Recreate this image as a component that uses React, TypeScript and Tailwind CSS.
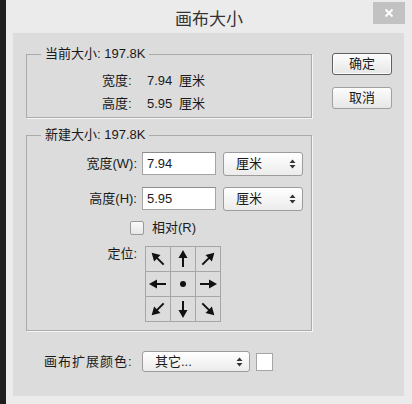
import React from "react";

const FONT = { fontFamily: '"Liberation Sans", "Noto Sans CJK SC", sans-serif' };

function Arrow({ angle }: { angle: number }) {
  return (
    <svg width="24" height="24" viewBox="0 0 24 24">
      <g transform={`rotate(${angle} 12 12)`}>
        <line x1="12" y1="20" x2="12" y2="9" stroke="#111" strokeWidth="2" />
        <polygon points="12,3 7.5,11 16.5,11" fill="#111" />
      </g>
    </svg>
  );
}

function SelectArrows() {
  return (
    <svg width="7" height="10" viewBox="0 0 7 10">
      <polygon points="3.5,0.5 6.5,4 0.5,4" fill="#333" />
      <polygon points="0.5,6 6.5,6 3.5,9.5" fill="#333" />
    </svg>
  );
}

function UnitSelect({ label, w }: { label: string; w: string }) {
  return (
    <div
      className={`${w} h-full flex items-center justify-between pl-[12px] pr-[6px] rounded-[3px] border border-[#9c9c9c] bg-gradient-to-b from-[#ffffff] to-[#ececec] text-[13px] text-[#1a1a1a]`}
    >
      <span>{label}</span>
      <SelectArrows />
    </div>
  );
}

export default function App() {
  const cells: (number | null)[] = [-45, 0, 45, -90, null, 90, -135, 180, 135];
  return (
    <div className="w-[412px] h-[404px] flex bg-[#1e1e1e] overflow-hidden" style={FONT}>
      <div className="ml-[6px] flex-1 flex flex-col bg-[#ebebeb]">
        {/* title bar */}
        <div className="h-[33px] relative flex items-center justify-center pt-[6px]">
          <span className="text-[17px] text-[#333]">画布大小</span>
          <div className="absolute top-[2px] right-[7px] w-[32px] h-[22px] bg-[#c2c2c2] flex items-center justify-center">
            <svg width="10" height="10" viewBox="0 0 10 10">
              <path d="M1.5 1.5 L8.5 8.5 M8.5 1.5 L1.5 8.5" stroke="#fff" strokeWidth="1.8" />
            </svg>
          </div>
        </div>

        {/* panel */}
        <div className="ml-[7px] mr-[8px] h-[363px] bg-[#dcdcdc] flex flex-col text-[#1a1a1a]">
          <div className="flex">
            <div className="ml-[13px] w-[286px] pt-[13px] flex flex-col">
              {/* box 1 */}
              <fieldset className="border border-[#ababab] shadow-[1px_1px_0_#f6f6f6] pb-[2px]">
                <legend className="ml-[14px] px-[4px] text-[13px] leading-[16px]">当前大小: 197.8K</legend>
                <div className="mt-[7px] flex flex-col text-[13px]">
                  <div className="h-[23px] flex items-center pl-[75px]">
                    <span className="w-[45px]">宽度:</span>
                    <span className="w-[32px]">7.94</span>
                    <span>厘米</span>
                  </div>
                  <div className="h-[23px] flex items-center pl-[75px]">
                    <span className="w-[45px]">高度:</span>
                    <span className="w-[32px]">5.95</span>
                    <span>厘米</span>
                  </div>
                </div>
              </fieldset>

              {/* box 2 */}
              <fieldset className="mt-[9px] border border-[#ababab] shadow-[1px_1px_0_#f6f6f6] pb-[8px]">
                <legend className="ml-[14px] px-[4px] text-[13px] leading-[16px]">新建大小: 197.8K</legend>
                <div className="mt-[9px] flex flex-col text-[13px]">
                  <div className="h-[23px] flex items-center">
                    <span className="w-[110px] text-right">宽度(W):</span>
                    <div className="ml-[5px] w-[74px] h-full border border-[#a4a4a4] border-t-[#8c8c8c] bg-white flex items-center pl-[4px]">
                      7.94
                    </div>
                    <div className="ml-[7px] h-[24px]">
                      <UnitSelect label="厘米" w="w-[80px]" />
                    </div>
                  </div>
                  <div className="mt-[12px] h-[23px] flex items-center">
                    <span className="w-[110px] text-right">高度(H):</span>
                    <div className="ml-[5px] w-[74px] h-full border border-[#a4a4a4] border-t-[#8c8c8c] bg-white flex items-center pl-[4px]">
                      5.95
                    </div>
                    <div className="ml-[7px] h-[24px]">
                      <UnitSelect label="厘米" w="w-[80px]" />
                    </div>
                  </div>
                  <div className="mt-[10px] h-[16px] flex items-center">
                    <div className="ml-[103px] w-[14px] h-[14px] border border-[#9a9a9a] rounded-[2px] bg-gradient-to-b from-[#fafafa] to-[#e6e6e6]" />
                    <span className="ml-[8px]">相对(R)</span>
                  </div>
                  <div className="mt-[10px] flex items-start">
                    <span className="w-[110px] text-right leading-[16px]">定位:</span>
                    <div className="ml-[8px] grid grid-cols-[24px_24px_24px] gap-px p-px bg-[#a6a6a6]">
                      {cells.map((a, i) => (
                        <div key={i} className="w-[24px] h-[24px] bg-[#dcdcdc] flex items-center justify-center">
                          {a === null ? (
                            <div className="w-[6px] h-[6px] rounded-full bg-[#111]" />
                          ) : (
                            <Arrow angle={a} />
                          )}
                        </div>
                      ))}
                    </div>
                  </div>
                </div>
              </fieldset>
            </div>

            {/* buttons */}
            <div className="ml-[20px] mt-[20px] flex flex-col gap-[12px]">
              <div className="w-[60px] h-[22px] rounded-[3px] border border-[#5f5f5f] shadow-[inset_0_0_0_1px_#fdfdfd] bg-gradient-to-b from-[#fdfdfd] to-[#e6e6e6] flex items-center justify-center text-[13px]">
                确定
              </div>
              <div className="w-[60px] h-[22px] rounded-[3px] border border-[#a0a0a0] bg-gradient-to-b from-[#fdfdfd] to-[#e6e6e6] flex items-center justify-center text-[13px]">
                取消
              </div>
            </div>
          </div>

          {/* bottom row */}
          <div className="mt-[20px] h-[21px] flex items-center pl-[31px] text-[13px]">
            <span className="w-[98px] tracking-[1px]">画布扩展颜色:</span>
            <UnitSelect label="其它..." w="w-[108px]" />
            <div className="ml-[6px] w-[17px] h-[18px] border border-[#a6a6a6] bg-white" />
          </div>
        </div>
      </div>
    </div>
  );
}
